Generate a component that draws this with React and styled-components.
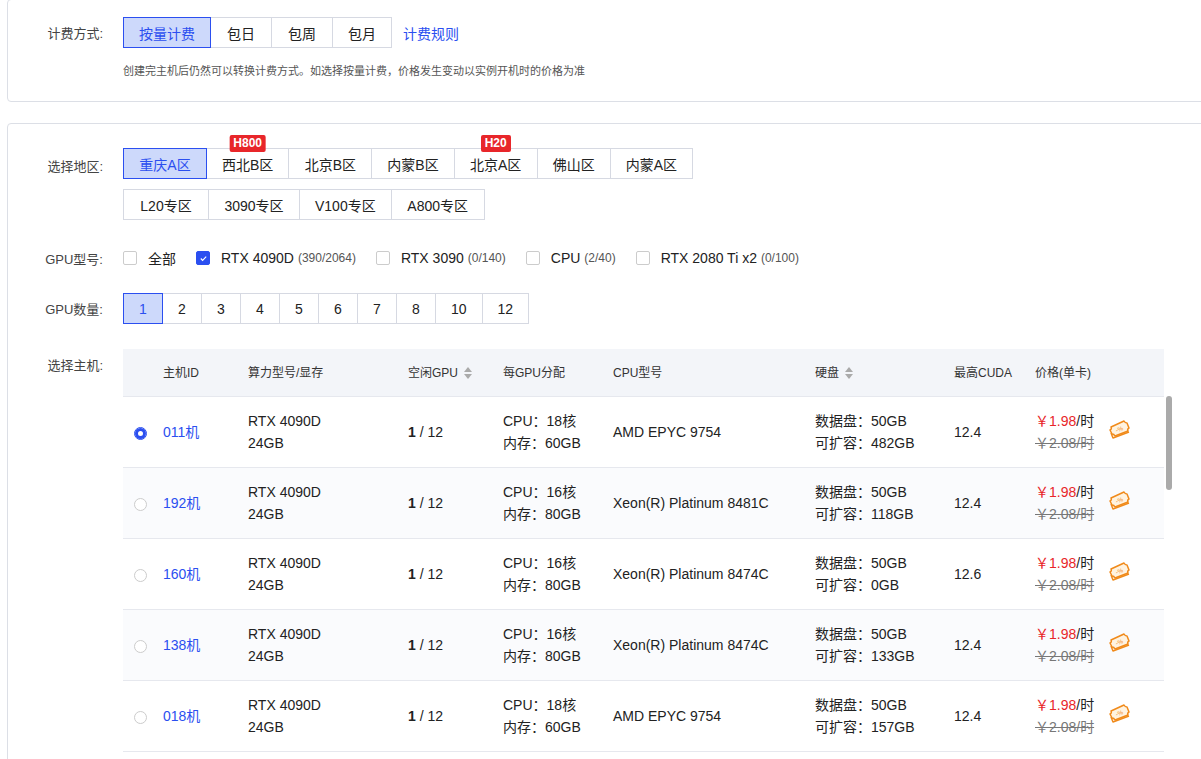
import styled, { createGlobalStyle } from "styled-components";

const Global = createGlobalStyle`
  body { margin: 0; background: #fff; font-family: "Liberation Sans", "Noto Sans CJK SC", sans-serif; color: #222; font-size: 13px; }
`;

const BLUE = "#2b4ff0";

const Card = styled.div`
  margin-left: 7px;
  margin-right: -10px;
  border: 1px solid #dcdfe6;
  border-radius: 4px;
  padding: ${(p) => p.pad};
  margin-top: ${(p) => p.top || 0}px;
`;
const Row = styled.div`
  display: flex;
  align-items: ${(p) => p.align || "center"};
  margin-bottom: ${(p) => p.mb || 0}px;
`;
const Label = styled.div`
  width: 95px;
  text-align: right;
  color: #444;
  font-size: 13px;
  flex-shrink: 0;
  margin-right: 20px;
  align-self: ${(p) => p.self || "auto"};
`;
const Group = styled.div`
  display: flex;
`;
const Btn = styled.div`
  position: relative;
  height: 31px;
  padding: 0 ${(p) => p.px || 15}px;
  min-width: ${(p) => p.w || 0}px;
  box-sizing: border-box;
  display: flex;
  align-items: center;
  justify-content: center;
  font-size: 14px;
  border: 1px solid ${(p) => (p.active ? BLUE : "#d6d9e2")};
  margin-left: -1px;
  background: ${(p) => (p.active ? "#cdd9fb" : "#fff")};
  color: ${(p) => (p.active ? BLUE : "#222")};
  z-index: ${(p) => (p.active ? 1 : 0)};
  &:first-child { margin-left: 0; }
`;
const Badge = styled.span`
  position: absolute;
  top: -14px;
  left: 50%;
  transform: translateX(-50%);
  background: #e8262a;
  color: #fff;
  font-size: 12px;
  font-weight: 700;
  padding: 1px 4px;
  border-radius: 2px;
  line-height: 15px;
`;
const Link = styled.span`
  color: ${BLUE};
  margin-left: 11px;
  font-size: 14px;
`;
const Hint = styled.div`
  font-size: 11px;
  color: #555;
  margin: 14px 0 0 115px;
`;
const Check = styled.span`
  width: 12px;
  height: 12px;
  border: 1px solid ${(p) => (p.on ? BLUE : "#ccc")};
  background: ${(p) => (p.on ? BLUE : "#fff")};
  border-radius: 2px;
  display: inline-flex;
  align-items: center;
  justify-content: center;
  margin-right: 11px;
`;
const CheckItem = styled.div`
  display: flex;
  align-items: center;
  margin-right: 20px;
  font-size: 14px;
  small { font-size: 12px; color: #555; margin-left: 4px; }
`;
const Table = styled.div`
  width: 1041px;
`;
const TR = styled.div`
  display: grid;
  grid-template-columns: 40px 85px 160px 95px 110px 202px 139px 81px 73px 1fr;
  align-items: center;
  height: ${(p) => (p.head ? 47 : 70)}px;
  background: ${(p) => (p.head ? "#f3f5f9" : p.alt ? "#fafbfd" : "#fff")};
  border-bottom: 1px solid #e6e8ee;
  line-height: 22px;
  color: ${(p) => (p.head ? "#333" : "#222")};
  font-size: ${(p) => (p.head ? 12 : 14)}px;
  b { font-weight: 700; }
`;
const Radio = styled.span`
  margin-left: 11px;
  width: 11px;
  height: 11px;
  border-radius: 50%;
  border: 1px solid ${(p) => (p.on ? BLUE : "#ccc")};
  background: #fff;
  box-shadow: inset 0 0 0 ${(p) => (p.on ? 3 : 0)}px ${BLUE};
  display: inline-block;
  vertical-align: middle;
`;
const Id = styled.span`
  color: ${BLUE};
`;
const Sort = styled.span`
  display: inline-flex;
  flex-direction: column;
  margin-left: 6px;
  vertical-align: middle;
  gap: 2px;
  i { width: 0; height: 0; border-left: 4px solid transparent; border-right: 4px solid transparent; }
  i:first-child { border-bottom: 5px solid #aaa; }
  i:last-child { border-top: 5px solid #aaa; }
`;
const Price = styled.div`
  span { color: #e8262a; }
  s { color: #777; }
`;
const Scroll = styled.div`
  position: absolute;
  left: 1166px;
  top: 396px;
  width: 6px;
  height: 94px;
  border-radius: 3px;
  background: #aaa;
`;

const Coupon = () => (
  <svg width="24" height="24" viewBox="0 0 24 24" fill="none" stroke="#f08a1a" strokeWidth="1.5" strokeLinejoin="round">
    <path d="M3 10 L16 4 Q17 6 19 6 L21 11 Q19 12 20 14 L7 19 Q6 17 4 17 L2 13 Q4 12 3 10Z" fill="#fff3e0" />
    <path d="M3 16 L5 21 L21 15" />
    <text x="7.5" y="14.5" fontSize="6" fill="#f08a1a" stroke="none" fontFamily="Liberation Sans" transform="rotate(-20 11 12)">-%</text>
  </svg>
);

const rows = [
  ["011机", "18", "60", "AMD EPYC 9754", "482GB", "12.4"],
  ["192机", "16", "80", "Xeon(R) Platinum 8481C", "118GB", "12.4"],
  ["160机", "16", "80", "Xeon(R) Platinum 8474C", "0GB", "12.6"],
  ["138机", "16", "80", "Xeon(R) Platinum 8474C", "133GB", "12.4"],
  ["018机", "18", "60", "AMD EPYC 9754", "157GB", "12.4"],
];

export default function App() {
  return (
    <div style={{ position: "relative", height: 759, overflow: "hidden" }}>
      <Global />
      <Card pad="17px 0 23px 0" top={-1}>
        <Row>
          <Label>计费方式:</Label>
          <Group>
            <Btn w={85} active>按量计费</Btn>
            <Btn w={62}>包日</Btn>
            <Btn w={62}>包周</Btn>
            <Btn w={59}>包月</Btn>
          </Group>
          <Link>计费规则</Link>
        </Row>
        <Hint>创建完主机后仍然可以转换计费方式。如选择按量计费，价格发生变动以实例开机时的价格为准</Hint>
      </Card>
      <Card pad="24px 0 0 0" top={21}>
        <Row align="flex-start" mb={28}>
          <Label self="flex-start" style={{ marginTop: 8 }}>选择地区:</Label>
          <div>
            <Group style={{ marginBottom: 10 }}>
              <Btn w={84} active>重庆A区</Btn>
              <Btn w={83}>西北B区<Badge>H800</Badge></Btn>
              <Btn w={84}>北京B区</Btn>
              <Btn w={83}>内蒙B区</Btn>
              <Btn w={84}>北京A区<Badge>H20</Badge></Btn>
              <Btn w={73}>佛山区</Btn>
              <Btn w={83}>内蒙A区</Btn>
            </Group>
            <Group>
              <Btn w={86}>L20专区</Btn>
              <Btn w={92}>3090专区</Btn>
              <Btn w={91}>V100专区</Btn>
              <Btn w={94}>A800专区</Btn>
            </Group>
          </div>
        </Row>
        <Row mb={25}>
          <Label>GPU型号:</Label>
          <CheckItem><Check />全部</CheckItem>
          <CheckItem>
            <Check on>
              <svg width="9" height="9" viewBox="0 0 10 10"><path d="M2 5 L4 7 L8 3" stroke="#fff" strokeWidth="1.3" fill="none" /></svg>
            </Check>
            RTX 4090D<small>(390/2064)</small>
          </CheckItem>
          <CheckItem><Check />RTX 3090<small>(0/140)</small></CheckItem>
          <CheckItem><Check />CPU<small>(2/40)</small></CheckItem>
          <CheckItem><Check />RTX 2080 Ti x2<small>(0/100)</small></CheckItem>
        </Row>
        <Row mb={25}>
          <Label>GPU数量:</Label>
          <Group>
            {["1", "2", "3", "4", "5", "6", "7", "8", "10", "12"].map((n, i) => (
              <Btn key={n} w={n.length > 1 ? 45 : 40} active={i === 0}>{n}</Btn>
            ))}
          </Group>
        </Row>
        <Row align="flex-start">
          <Label self="flex-start" style={{ marginTop: 6 }}>选择主机:</Label>
          <Table>
            <TR head>
              <span />
              <span>主机ID</span>
              <span>算力型号/显存</span>
              <span>空闲GPU<Sort><i /><i /></Sort></span>
              <span>每GPU分配</span>
              <span>CPU型号</span>
              <span>硬盘<Sort><i /><i /></Sort></span>
              <span>最高CUDA</span>
              <span>价格(单卡)</span>
              <span />
            </TR>
            {rows.map((r, i) => (
              <TR key={r[0]} alt={i % 2 === 1}>
                <span><Radio on={i === 0} /></span>
                <Id>{r[0]}</Id>
                <div>RTX 4090D<br />24GB</div>
                <div><b>1</b> / 12</div>
                <div>CPU：{r[1]}核<br />内存：{r[2]}GB</div>
                <div>{r[3]}</div>
                <div>数据盘：50GB<br />可扩容：{r[4]}</div>
                <div>{r[5]}</div>
                <Price><span>￥1.98</span>/时<br /><s>￥2.08/时</s></Price>
                <div><Coupon /></div>
              </TR>
            ))}
            <TR />
          </Table>
        </Row>
      </Card>
      <Scroll />
    </div>
  );
}
